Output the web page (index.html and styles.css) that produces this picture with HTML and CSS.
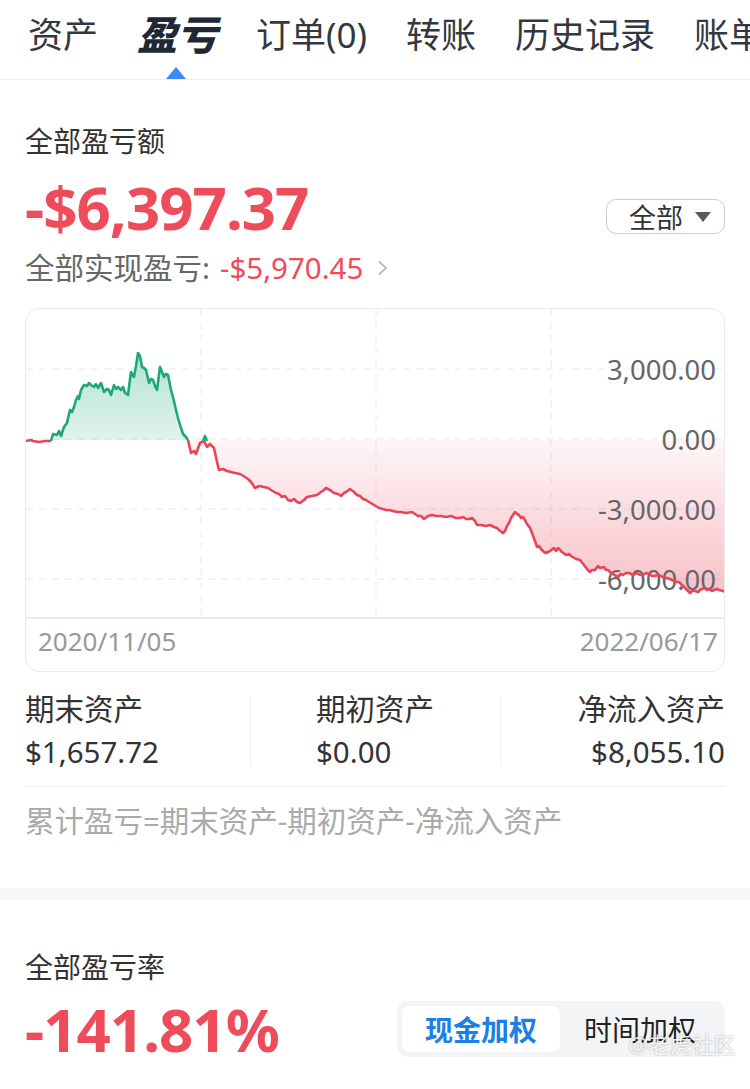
FILE: index.html
```html
<!DOCTYPE html>
<html lang="zh-CN">
<head>
    <meta charset="UTF-8">
    <meta name="viewport" content="width=device-width, initial-scale=1.0">
    <title>盈亏</title>
    <link rel="stylesheet" href="styles.css">
</head>
<body>
    <nav class="tabs">
        <span class="tab">资产</span>
        <span class="tab active">盈亏</span>
        <span class="tab">订单(0)</span>
        <span class="tab">转账</span>
        <span class="tab">历史记录</span>
        <span class="tab">账单</span>
    </nav>

    <section class="panel">
        <div class="label">全部盈亏额</div>
        <div class="amount-row">
            <div class="amount">-$6,397.37</div>
            <div class="select">全部 <span class="caret"></span></div>
        </div>
        <div class="realized">
            全部实现盈亏: <span class="neg">-$5,970.45</span>
            <svg class="chevron" width="12" height="16" viewBox="0 0 12 16"><path d="M2 1.5 L9 8 L2 14.5" fill="none" stroke="#bbb" stroke-width="1.8"/></svg>
        </div>

        <div class="chart-card">
            <svg class="chart" width="700" height="310" viewBox="25 309 700 310">
                <defs>
                    <linearGradient id="gain" x1="0" y1="350" x2="0" y2="440" gradientUnits="userSpaceOnUse">
                        <stop offset="0" stop-color="#22aa7a" stop-opacity="0.34"/>
                        <stop offset="1" stop-color="#22aa7a" stop-opacity="0.14"/>
                    </linearGradient>
                    <linearGradient id="loss" x1="0" y1="440" x2="0" y2="595" gradientUnits="userSpaceOnUse">
                        <stop offset="0" stop-color="#e9455a" stop-opacity="0.05"/>
                        <stop offset="1" stop-color="#e9455a" stop-opacity="0.34"/>
                    </linearGradient>
                </defs>
                <g class="grid">
                    <line x1="25" y1="369" x2="725" y2="369"/>
                    <line x1="25" y1="439" x2="725" y2="439"/>
                    <line x1="25" y1="509" x2="725" y2="509"/>
                    <line x1="25" y1="579" x2="725" y2="579"/>
                    <line x1="200" y1="309" x2="200" y2="618"/>
                    <line x1="375" y1="309" x2="375" y2="618"/>
                    <line x1="550" y1="309" x2="550" y2="618"/>
                </g>
                <line class="axis" x1="25" y1="618" x2="725" y2="618"/>

                <polygon fill="url(#gain)" points="52,440 52,434 56,435 58,431 60,436 63,427 66,423 68,414 69,410 71,412 73,407 75,400 77,396 78,399 80,390 83,385 86,386 88,383 90,385 93,387 95,384 97,388 100,383 103,392 106,389 108,390 110,395 113,385 115,389 117,387 120,390 122,387 124,393 127,395 130,372 133,377 135,366 137,353 139,356 141,367 143,368 145,370 148,383 150,379 152,380 154,386 156,390 159,367 161,372 163,377 165,374 167,375 170,390 172,397 175,410 177,418 180,428 182,434 185,437 187,440"/>
                <polygon fill="url(#loss)" points="187,440 190,453 193,451 195,454 199,443 203,441 206,447 209,444 213,448 216,462 218,470 222,469 226,471 230,472 234,473 239,474 244,477 247,479 250,482 254,488 258,486 263,487 267,488 270,490 275,493 278,494 281,497 284,496 287,500 290,501 293,499 296,502 299,503 303,500 306,497 311,496 316,495 320,492 323,490 325,488 329,490 333,493 337,494 340,496 343,493 345,492 349,489 353,492 356,495 359,496 362,499 365,500 368,502 373,505 378,508 382,509 385,510 388,510 392,511 396,512 400,512 405,513 411,512 414,514 417,516 420,516 423,519 427,516 431,515 435,516 440,516 445,517 450,516 455,518 459,518 462,517 465,519 468,519 471,518 474,521 476,525 480,525 485,526 489,525 493,527 496,528 498,530 502,533 504,531 506,526 508,523 510,518 512,515 514,512 516,514 518,515 520,518 522,517 524,520 526,524 529,528 531,533 534,541 536,547 538,546 540,549 543,552 545,553 549,551 553,548 555,551 557,548 559,550 561,552 565,555 568,554 570,556 575,559 579,560 583,565 586,569 589,572 591,570 594,570 597,566 599,568 603,567 605,570 607,570 610,573 612,574 615,576 617,577 620,574 622,575 625,573 628,573 632,575 636,573 639,575 642,575 645,573 648,574 651,576 654,576 657,575 660,576 663,578 666,578 669,579 671,580 675,582 678,582 680,584 682,586 684,588 687,591 689,593 692,590 694,591 697,592 699,590 701,589 703,588 706,590 708,589 711,591 713,590 716,589 718,590 722,591 725,592 725,440"/>

                <g class="y-labels">
                    <text x="715" y="369">3,000.00</text>
                    <text x="715" y="439">0.00</text>
                    <text x="715" y="509">-3,000.00</text>
                    <text x="715" y="579">-6,000.00</text>
                </g>

                <polyline class="line-loss" points="25,441 30,440 32,441 38,442 44,441 50,441"/>
                <polyline class="line-gain" points="50,441 52,434 56,435 58,431 60,436 63,427 66,423 68,414 69,410 71,412 73,407 75,400 77,396 78,399 80,390 83,385 86,386 88,383 90,385 93,387 95,384 97,388 100,383 103,392 106,389 108,390 110,395 113,385 115,389 117,387 120,390 122,387 124,393 127,395 130,372 133,377 135,366 137,353 139,356 141,367 143,368 145,370 148,383 150,379 152,380 154,386 156,390 159,367 161,372 163,377 165,374 167,375 170,390 172,397 175,410 177,418 180,428 182,434 185,437 187,440"/>
                <polyline class="line-loss" points="187,440 190,453 193,451 195,454 199,443 203,441 206,447 209,444 213,448 216,462 218,470 222,469 226,471 230,472 234,473 239,474 244,477 247,479 250,482 254,488 258,486 263,487 267,488 270,490 275,493 278,494 281,497 284,496 287,500 290,501 293,499 296,502 299,503 303,500 306,497 311,496 316,495 320,492 323,490 325,488 329,490 333,493 337,494 340,496 343,493 345,492 349,489 353,492 356,495 359,496 362,499 365,500 368,502 373,505 378,508 382,509 385,510 388,510 392,511 396,512 400,512 405,513 411,512 414,514 417,516 420,516 423,519 427,516 431,515 435,516 440,516 445,517 450,516 455,518 459,518 462,517 465,519 468,519 471,518 474,521 476,525 480,525 485,526 489,525 493,527 496,528 498,530 502,533 504,531 506,526 508,523 510,518 512,515 514,512 516,514 518,515 520,518 522,517 524,520 526,524 529,528 531,533 534,541 536,547 538,546 540,549 543,552 545,553 549,551 553,548 555,551 557,548 559,550 561,552 565,555 568,554 570,556 575,559 579,560 583,565 586,569 589,572 591,570 594,570 597,566 599,568 603,567 605,570 607,570 610,573 612,574 615,576 617,577 620,574 622,575 625,573 628,573 632,575 636,573 639,575 642,575 645,573 648,574 651,576 654,576 657,575 660,576 663,578 666,578 669,579 671,580 675,582 678,582 680,584 682,586 684,588 687,591 689,593 692,590 694,591 697,592 699,590 701,589 703,588 706,590 708,589 711,591 713,590 716,589 718,590 722,591 725,592"/>
                <polyline class="line-gain" points="202,441 204,436 206,441"/>
            </svg>
            <div class="x-labels">
                <span>2020/11/05</span>
                <span>2022/06/17</span>
            </div>
        </div>

        <div class="stats">
            <div class="stat">
                <div>期末资产</div>
                <div>$1,657.72</div>
            </div>
            <div class="divider"></div>
            <div class="stat middle">
                <div>期初资产</div>
                <div>$0.00</div>
            </div>
            <div class="divider"></div>
            <div class="stat right">
                <div>净流入资产</div>
                <div>$8,055.10</div>
            </div>
        </div>

        <div class="formula">累计盈亏=期末资产-期初资产-净流入资产</div>
    </section>

    <div class="band"></div>

    <section class="panel rate">
        <div class="label">全部盈亏率</div>
        <div class="amount-row center">
            <div class="amount">-141.81%</div>
            <div class="toggle">
                <span class="option on">现金加权</span>
                <span class="option">时间加权</span>
            </div>
        </div>
    </section>

    <div class="watermark">
        <div class="wm-main">@老虎社区</div>
        <div class="wm-user">@Hoshihara</div>
    </div>
</body>
</html>
```

FILE: styles.css
```css
body {
    margin: 0;
    width: 750px;
    background-color: #FFFFFF;
    color: #333333;
    font-family: "Noto Sans", "Noto Sans CJK SC", sans-serif;
    overflow: hidden;
    position: relative;
}

.tabs {
    display: flex;
    gap: 39px;
    height: 79px;
    padding-left: 28px;
    border-bottom: 1px solid #EEEEEE;
    white-space: nowrap;
    overflow: hidden;
}

.tab {
    font-size: 35px;
    line-height: 70px;
    color: #333840;
    flex-shrink: 0;
}

.tab.active {
    position: relative;
    font-size: 40px;
    font-weight: 900;
    font-style: italic;
    color: #222833;
}

.tab.active::after {
    content: "";
    position: absolute;
    left: 50%;
    bottom: 0;
    margin-left: -11px;
    border-left: 10px solid transparent;
    border-right: 10px solid transparent;
    border-bottom: 12px solid #3D8AF7;
}

.panel {
    padding: 41px 25px 0;
}

.label {
    font-size: 28px;
    line-height: 40px;
    color: #333333;
}

.amount-row {
    display: flex;
    justify-content: space-between;
    align-items: flex-start;
    margin-top: 14px;
}

.amount-row.center {
    align-items: center;
    margin-top: 10px;
}

.amount {
    font-size: 60px;
    line-height: 64px;
    font-weight: 700;
    color: #EE4B5B;
    letter-spacing: -1px;
}

.select {
    display: flex;
    align-items: center;
    gap: 12px;
    box-sizing: border-box;
    height: 35px;
    margin-top: 24px;
    padding: 0 13px 0 22px;
    border: 1px solid #CCCCCC;
    border-radius: 10px;
    font-size: 27px;
    color: #333333;
}

.caret {
    width: 0;
    height: 0;
    border-left: 8px solid transparent;
    border-right: 8px solid transparent;
    border-top: 10px solid #555A62;
}

.realized {
    display: flex;
    align-items: center;
    margin-top: 9px;
    font-size: 29.5px;
    line-height: 40px;
    color: #666666;
}

.neg {
    color: #EE4B5B;
    margin-left: 10px;
}

.chevron {
    margin-left: 14px;
}

.chart-card {
    margin-top: 20px;
    border: 1px solid #EBEBEB;
    border-radius: 14px;
    overflow: hidden;
}

.chart {
    display: block;
}

.grid line {
    stroke: #E8E8E8;
    stroke-width: 1;
    stroke-dasharray: 7 6;
}

.axis {
    stroke: #EBEBEB;
    stroke-width: 2;
}

.y-labels text {
    font-family: "Noto Sans", sans-serif;
    font-size: 27.5px;
    fill: #666666;
    text-anchor: end;
    dominant-baseline: central;
}

.line-gain,
.line-loss {
    fill: none;
    stroke-width: 2.6;
    stroke-linejoin: round;
}

.line-gain {
    stroke: #1FA877;
}

.line-loss {
    stroke: #E9455A;
}

.x-labels {
    display: flex;
    justify-content: space-between;
    padding: 5px 6px 13px 12px;
    font-size: 26px;
    line-height: 34px;
    color: #999999;
}

.stats {
    display: grid;
    grid-template-columns: 225px 1px 1fr 1px 224px;
    margin-top: 17px;
    padding-bottom: 14px;
    border-bottom: 1px solid #EEEEEE;
}

.stat {
    font-size: 29.5px;
    line-height: 40px;
    color: #333333;
}

.stat div + div {
    margin-top: 3px;
}

.stat.middle {
    padding-left: 65px;
}

.stat.right {
    text-align: right;
}

.divider {
    background-color: #EEEEEE;
    margin: 7px 0 6px;
}

.formula {
    padding: 14px 0 47px;
    font-size: 29.5px;
    line-height: 40px;
    color: #AAAAAA;
}

.band {
    height: 12px;
    background-color: #F5F6F8;
}

.panel.rate {
    padding-top: 47px;
}

.toggle {
    display: flex;
    box-sizing: border-box;
    width: 328px;
    height: 56px;
    padding: 5px;
    background-color: #F3F4F6;
    border-radius: 11px;
}

.option {
    flex: 1;
    display: flex;
    align-items: center;
    justify-content: center;
    font-size: 28px;
    color: #222222;
    border-radius: 8px;
}

.option.on {
    background-color: #FFFFFF;
    color: #1A7FE6;
    font-weight: 700;
    flex: 0 0 158px;
}

.watermark {
    position: absolute;
    right: 14px;
    top: 1030px;
    text-align: right;
}

.wm-main {
    font-size: 22px;
    line-height: 28px;
    color: rgba(255, 255, 255, 0.9);
    text-shadow: 0 0 2px rgba(0, 0, 0, 0.35);
}

.wm-user {
    margin-top: 4px;
    font-size: 15px;
    line-height: 20px;
    color: #C4C4C4;
}
```
